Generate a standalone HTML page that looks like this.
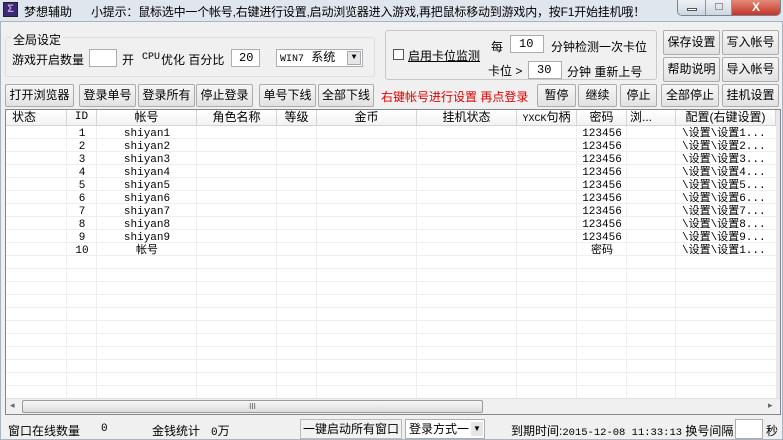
<!DOCTYPE html><html><head><meta charset="utf-8"><style>
*{box-sizing:border-box;margin:0;padding:0}
body{width:783px;height:440px;overflow:hidden;background:#dfe6ee;font-family:"Liberation Sans","Noto Sans CJK SC",sans-serif;font-size:12px;color:#000;position:relative}
.a{position:absolute;white-space:nowrap}
.win{position:absolute;left:0;top:21px;width:783px;height:419px;background:#f0f0f0;border:1px solid #a9b4c1}
.btn{position:absolute;height:23px;background:linear-gradient(#f6f6f6,#e2e2e2);border:1px solid #acacac;border-radius:2px;text-align:center;line-height:21px;font-size:12px}
.grp{position:absolute;border:1px solid #d5dfe5;border-radius:3px}
.inp{position:absolute;background:#fff;border:1px solid #abadb3;height:18px;line-height:16px;font-size:12px;font-family:"Liberation Mono","Noto Sans CJK SC",monospace}
.th{position:absolute;top:0;height:15px;border-right:1px solid #d5d5d5;text-align:center;line-height:14px;font-size:12px}
.mono{font-family:"Liberation Mono","Noto Sans CJK SC",monospace;font-size:11px}
.vl{position:absolute;top:16px;width:1px;height:272px;background:#eee}
</style></head><body>
<div class="a" style="left:3px;top:2px;width:15px;height:15px;background:#3a2a6e;border:1px solid #222;color:#c8a0ff;font-size:11px;line-height:13px;text-align:center;font-weight:bold">Σ</div>
<div class="a" style="left:24px;top:3px;font-size:12px">梦想辅助</div>
<div class="a" style="left:91px;top:3px;font-size:12px;letter-spacing:-0.2px">小提示：鼠标选中一个帐号,右键进行设置,启动浏览器进入游戏,再把鼠标移动到游戏内，按F1开始挂机哦！</div>
<div class="a" style="left:677px;top:0;width:104px;height:16px;border:1px solid #7a8390;border-top:none;border-radius:0 0 5px 5px;overflow:hidden;display:flex">
<div style="width:28px;background:linear-gradient(#eef2f6,#cdd6e0);border-right:1px solid #8a96a3;position:relative"><span style="position:absolute;left:9px;top:8px;width:10px;height:3px;border:1px solid #555;background:#fff"></span></div>
<div style="width:26px;background:linear-gradient(#eef2f6,#cdd6e0);border-right:1px solid #8a96a3;position:relative"><span style="position:absolute;left:9px;top:3px;width:8px;height:7px;border:1px solid #999"></span></div>
<div style="flex:1;background:linear-gradient(#e48a78,#c2352a);color:#fff;text-align:center;font-weight:bold;line-height:14px">X</div></div>
<div class="win"></div>

<div class="grp" style="left:5px;top:37px;width:370px;height:40px"></div>
<div class="a" style="left:11px;top:31px;background:#f0f0f0;padding:0 2px;font-size:12px">全局设定</div>
<div class="a" style="left:12px;top:51px">游戏开启数量</div>
<div class="inp" style="left:89px;top:49px;width:28px"></div>
<div class="a" style="left:122px;top:51px">开</div>
<div class="a mono" style="left:142px;top:52px;font-size:10px">CPU</div><div class="a" style="left:161px;top:51px">优化 百分比</div>
<div class="inp" style="left:231px;top:49px;width:29px;padding-left:7px">20</div>
<div class="inp" style="left:276px;top:49px;width:87px;padding-left:3px"><span class="mono" style="font-size:10px">WIN7</span> 系统<span style="position:absolute;right:1px;top:1px;width:14px;height:14px;background:#e6e6e6;border:1px solid #aaa;font-size:8px;text-align:center;line-height:12px">▼</span></div>

<div class="grp" style="left:385px;top:30px;width:272px;height:50px;border-color:#c8c8c8"></div>
<div class="a" style="left:393px;top:49px;width:11px;height:11px;background:#fff;border:1px solid #555"></div>
<div class="a" style="left:408px;top:47px;text-decoration:underline">启用卡位监测</div>
<div class="a" style="left:491px;top:38px">每</div>
<div class="inp" style="left:510px;top:35px;width:34px;padding-left:8px">10</div>
<div class="a" style="left:551px;top:38px">分钟检测一次卡位</div>
<div class="a" style="left:488px;top:62px">卡位 &gt;</div>
<div class="inp" style="left:528px;top:61px;width:34px;padding-left:8px">30</div>
<div class="a" style="left:567px;top:63px">分钟 重新上号</div>

<div class="btn" style="left:663px;top:30px;width:57px;height:25px;line-height:23px">保存设置</div>
<div class="btn" style="left:722px;top:30px;width:57px;height:25px;line-height:23px">写入帐号</div>
<div class="btn" style="left:663px;top:57px;width:57px;height:25px;line-height:23px">帮助说明</div>
<div class="btn" style="left:722px;top:57px;width:57px;height:25px;line-height:23px">导入帐号</div>

<div class="btn" style="left:5px;top:84px;width:69px">打开浏览器</div>
<div class="btn" style="left:79px;top:84px;width:57px">登录单号</div>
<div class="btn" style="left:138px;top:84px;width:57px">登录所有</div>
<div class="btn" style="left:196px;top:84px;width:57px">停止登录</div>
<div class="btn" style="left:259px;top:84px;width:57px">单号下线</div>
<div class="btn" style="left:318px;top:84px;width:56px">全部下线</div>
<div class="a" style="left:381px;top:88px;color:#e00000;font-size:12px">右键帐号进行设置 再点登录</div>
<div class="btn" style="left:537px;top:84px;width:39px">暂停</div>
<div class="btn" style="left:578px;top:84px;width:39px">继续</div>
<div class="btn" style="left:620px;top:84px;width:37px">停止</div>
<div class="btn" style="left:661px;top:84px;width:58px">全部停止</div>
<div class="btn" style="left:722px;top:84px;width:57px">挂机设置</div>

<div class="a" style="left:5px;top:109px;width:776px;height:306px;background:#fff;border:1px solid #828790;overflow:hidden">
<div class="a" style="left:0;top:0;width:770px;height:16px;background:linear-gradient(#fff,#f2f2f2);border-bottom:1px solid #d5d5d5"></div>
<div class="a" style="left:0;top:16px;width:770px;height:272px;background:repeating-linear-gradient(#fff 0 12px,#eeeeee 12px 13px)"></div>
<div class="th" style="left:0;width:61px;text-align:left;padding-left:6px">状态</div>
<div class="th mono" style="left:61px;width:30px">ID</div>
<div class="th" style="left:91px;width:100px">帐号</div>
<div class="th" style="left:191px;width:80px">角色名称</div>
<div class="th" style="left:271px;width:40px">等级</div>
<div class="th" style="left:311px;width:100px">金币</div>
<div class="th" style="left:411px;width:100px">挂机状态</div>
<div class="th" style="left:511px;width:60px"><span class="mono" style="font-size:10px">YXCK</span>句柄</div>
<div class="th" style="left:571px;width:50px">密码</div>
<div class="th" style="left:621px;width:49px;text-align:left;padding-left:3px">浏...</div>
<div class="th" style="left:670px;width:100px">配置(右键设置)</div>
<div class="vl" style="left:60px"></div><div class="vl" style="left:90px"></div><div class="vl" style="left:190px"></div><div class="vl" style="left:270px"></div><div class="vl" style="left:310px"></div><div class="vl" style="left:410px"></div><div class="vl" style="left:510px"></div><div class="vl" style="left:570px"></div><div class="vl" style="left:620px"></div><div class="vl" style="left:669px"></div>
<div class="a mono" style="left:61px;top:18px;width:30px;text-align:center;line-height:13px;font-size:11px">1<br>2<br>3<br>4<br>5<br>6<br>7<br>8<br>9<br>10</div>
<div class="a mono" style="left:91px;top:18px;width:100px;text-align:center;line-height:13px;font-size:11px">shiyan1<br>shiyan2<br>shiyan3<br>shiyan4<br>shiyan5<br>shiyan6<br>shiyan7<br>shiyan8<br>shiyan9<br>帐号</div>
<div class="a mono" style="left:571px;top:18px;width:50px;text-align:center;line-height:13px;font-size:11px">123456<br>123456<br>123456<br>123456<br>123456<br>123456<br>123456<br>123456<br>123456<br>密码</div>
<div class="a mono" style="left:676px;top:18px;line-height:13px;font-size:11px">\设置\设置1...<br>\设置\设置2...<br>\设置\设置3...<br>\设置\设置4...<br>\设置\设置5...<br>\设置\设置6...<br>\设置\设置7...<br>\设置\设置8...<br>\设置\设置9...<br>\设置\设置1...</div>
<div class="a" style="left:770px;top:0;width:4px;height:289px;background:#e8e8e8"></div>
<div class="a" style="left:0;top:288px;width:774px;height:16px;background:#f0f0f0;border-top:1px solid #e0e0e0">
<span class="a" style="left:4px;top:1px;font-size:9px;color:#666">◂</span>
<div class="a" style="left:16px;top:1px;width:461px;height:13px;background:linear-gradient(#f6f6f6,#dcdcdc);border:1px solid #9a9a9a;border-radius:2px;text-align:center;font-size:8px;line-height:11px;color:#555">III</div>
<span class="a" style="left:762px;top:1px;font-size:9px;color:#666">▸</span></div>
</div>

<div class="a" style="left:8px;top:422px">窗口在线数量</div>
<div class="a mono" style="left:101px;top:423px">0</div>
<div class="a" style="left:152px;top:422px">金钱统计</div>
<div class="a" style="left:211px;top:422px"><span class="mono">0</span>万</div>
<div class="a" style="left:300px;top:419px;width:102px;height:20px;border:1px solid #bbb;text-align:center;line-height:18px;background:#f2f2f2">一键启动所有窗口</div>
<div class="inp" style="left:405px;top:419px;width:80px;height:20px;font-family:'Liberation Sans','Noto Sans CJK SC',sans-serif;padding-left:3px;line-height:18px">登录方式一<span style="position:absolute;right:1px;top:2px;width:12px;height:14px;background:#e6e6e6;font-size:8px;text-align:center;line-height:14px">▼</span></div>
<div class="a" style="left:511px;top:422px">到期时间:<span class="mono" style="font-size:10.5px">2015-12-08 11:33:13</span> 换号间隔</div>
<div class="inp" style="left:735px;top:419px;width:28px;height:20px"></div>
<div class="a" style="left:766px;top:422px">秒</div>
</body></html>
